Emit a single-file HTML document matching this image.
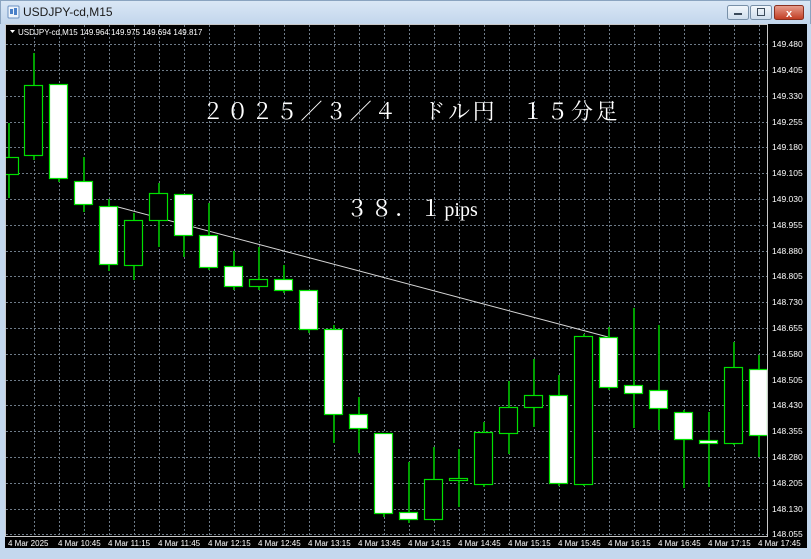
<!DOCTYPE html>
<html><head><meta charset="utf-8"><style>
html,body{margin:0;padding:0;width:811px;height:559px;overflow:hidden;background:#c4d8ee;}
svg{display:block}
</style></head><body>
<svg width="811" height="559" xmlns="http://www.w3.org/2000/svg" font-family="Liberation Sans, sans-serif">
<defs>
<linearGradient id="tb" x1="0" y1="0" x2="0" y2="1"><stop offset="0" stop-color="#dbe8f6"/><stop offset="1" stop-color="#c2d6ec"/></linearGradient>
<linearGradient id="cl" x1="0" y1="0" x2="0" y2="1"><stop offset="0" stop-color="#e8a090"/><stop offset="1" stop-color="#c03a20"/></linearGradient>
<linearGradient id="bt" x1="0" y1="0" x2="0" y2="1"><stop offset="0" stop-color="#f4f8fc"/><stop offset="1" stop-color="#ccdcec"/></linearGradient>
<clipPath id="plot"><rect x="6" y="24" width="761" height="513"/></clipPath>
</defs>
<rect x="0" y="0" width="811" height="559" fill="#c4d8ee"/>
<rect x="0" y="0" width="811" height="24" fill="url(#tb)"/>
<rect x="0.5" y="0.5" width="810" height="558" fill="none" stroke="#8aa4c0"/>
<!-- title icon -->
<rect x="8" y="6" width="11" height="12" rx="1" fill="#eef4fb" stroke="#6a90c0"/>
<rect x="10" y="9" width="3" height="5" fill="#4a80c8"/><rect x="14" y="8" width="3" height="7" fill="#4a80c8"/>
<text x="23" y="16" font-size="12" fill="#1a1a1a">USDJPY-cd,M15</text>
<!-- buttons -->
<rect x="727.5" y="5.5" width="21" height="14" rx="2" fill="url(#bt)" stroke="#7890a8"/>
<rect x="734" y="13" width="8" height="2" fill="#3a4a5a"/>
<rect x="750.5" y="5.5" width="21" height="14" rx="2" fill="url(#bt)" stroke="#7890a8"/>
<rect x="757.5" y="8.5" width="7" height="7" fill="none" stroke="#3a4a5a"/>
<rect x="774.5" y="5.5" width="29" height="14" rx="2" fill="url(#cl)" stroke="#8a3020"/>
<text x="789" y="17" font-size="11" font-weight="bold" fill="#fff" text-anchor="middle">x</text>
<!-- chart area -->
<rect x="5" y="24" width="802" height="524" fill="#000"/>
<g stroke="#6e7b88" stroke-width="1" stroke-dasharray="2 2">
<line x1="6" y1="44.5" x2="767" y2="44.5"/><line x1="6" y1="70.5" x2="767" y2="70.5"/><line x1="6" y1="96.5" x2="767" y2="96.5"/><line x1="6" y1="122.5" x2="767" y2="122.5"/><line x1="6" y1="147.5" x2="767" y2="147.5"/><line x1="6" y1="173.5" x2="767" y2="173.5"/><line x1="6" y1="199.5" x2="767" y2="199.5"/><line x1="6" y1="225.5" x2="767" y2="225.5"/><line x1="6" y1="251.5" x2="767" y2="251.5"/><line x1="6" y1="276.5" x2="767" y2="276.5"/><line x1="6" y1="302.5" x2="767" y2="302.5"/><line x1="6" y1="328.5" x2="767" y2="328.5"/><line x1="6" y1="354.5" x2="767" y2="354.5"/><line x1="6" y1="380.5" x2="767" y2="380.5"/><line x1="6" y1="405.5" x2="767" y2="405.5"/><line x1="6" y1="431.5" x2="767" y2="431.5"/><line x1="6" y1="457.5" x2="767" y2="457.5"/><line x1="6" y1="483.5" x2="767" y2="483.5"/><line x1="6" y1="509.5" x2="767" y2="509.5"/><line x1="6" y1="534.5" x2="767" y2="534.5"/>
<line x1="34.5" y1="25" x2="34.5" y2="537"/><line x1="59.5" y1="25" x2="59.5" y2="537"/><line x1="84.5" y1="25" x2="84.5" y2="537"/><line x1="109.5" y1="25" x2="109.5" y2="537"/><line x1="134.5" y1="25" x2="134.5" y2="537"/><line x1="159.5" y1="25" x2="159.5" y2="537"/><line x1="184.5" y1="25" x2="184.5" y2="537"/><line x1="209.5" y1="25" x2="209.5" y2="537"/><line x1="234.5" y1="25" x2="234.5" y2="537"/><line x1="259.5" y1="25" x2="259.5" y2="537"/><line x1="284.5" y1="25" x2="284.5" y2="537"/><line x1="309.5" y1="25" x2="309.5" y2="537"/><line x1="334.5" y1="25" x2="334.5" y2="537"/><line x1="359.5" y1="25" x2="359.5" y2="537"/><line x1="384.5" y1="25" x2="384.5" y2="537"/><line x1="409.5" y1="25" x2="409.5" y2="537"/><line x1="434.5" y1="25" x2="434.5" y2="537"/><line x1="459.5" y1="25" x2="459.5" y2="537"/><line x1="484.5" y1="25" x2="484.5" y2="537"/><line x1="509.5" y1="25" x2="509.5" y2="537"/><line x1="534.5" y1="25" x2="534.5" y2="537"/><line x1="559.5" y1="25" x2="559.5" y2="537"/><line x1="584.5" y1="25" x2="584.5" y2="537"/><line x1="609.5" y1="25" x2="609.5" y2="537"/><line x1="634.5" y1="25" x2="634.5" y2="537"/><line x1="659.5" y1="25" x2="659.5" y2="537"/><line x1="684.5" y1="25" x2="684.5" y2="537"/><line x1="709.5" y1="25" x2="709.5" y2="537"/><line x1="734.5" y1="25" x2="734.5" y2="537"/><line x1="759.5" y1="25" x2="759.5" y2="537"/>
</g>
<!-- text overlays -->
<text x="202" y="119" font-family="Liberation Serif, Noto Serif CJK SC, serif" font-size="22" letter-spacing="2.6" fill="#fff">２０２５／３／４　ドル円　１５分足</text>
<text x="346" y="216" font-family="Liberation Serif, Noto Serif CJK SC, serif" font-size="22" fill="#fff"><tspan letter-spacing="2.6">３８．１</tspan><tspan font-size="20">pips</tspan></text>
<!-- candles -->
<g clip-path="url(#plot)">
<line x1="118" y1="207" x2="608" y2="337" stroke="#d8d8d8" stroke-width="1"/>
<g stroke="#00a000" stroke-width="2">
<line x1="9" y1="123" x2="9" y2="198"/><line x1="34" y1="53" x2="34" y2="160"/><line x1="59" y1="84" x2="59" y2="182"/><line x1="84" y1="157" x2="84" y2="212"/><line x1="109" y1="199" x2="109" y2="271"/><line x1="134" y1="213" x2="134" y2="280"/><line x1="159" y1="183" x2="159" y2="247"/><line x1="184" y1="194" x2="184" y2="257"/><line x1="209" y1="203" x2="209" y2="270"/><line x1="234" y1="251" x2="234" y2="290"/><line x1="259" y1="247" x2="259" y2="290"/><line x1="284" y1="265" x2="284" y2="293"/><line x1="309" y1="290" x2="309" y2="333"/><line x1="334" y1="325" x2="334" y2="443"/><line x1="359" y1="397" x2="359" y2="453"/><line x1="384" y1="433" x2="384" y2="517"/><line x1="409" y1="462" x2="409" y2="523"/><line x1="434" y1="447" x2="434" y2="521"/><line x1="459" y1="449" x2="459" y2="507"/><line x1="484" y1="422" x2="484" y2="487"/><line x1="509" y1="381" x2="509" y2="454"/><line x1="534" y1="359" x2="534" y2="427"/><line x1="559" y1="375" x2="559" y2="486"/><line x1="584" y1="334" x2="584" y2="486"/><line x1="609" y1="327" x2="609" y2="390"/><line x1="634" y1="308" x2="634" y2="428"/><line x1="659" y1="325" x2="659" y2="430"/><line x1="684" y1="410" x2="684" y2="488"/><line x1="709" y1="412" x2="709" y2="487"/><line x1="734" y1="342" x2="734" y2="445"/><line x1="759" y1="355" x2="759" y2="457"/>
</g>
<g stroke="#00e000" stroke-width="1.2">
<rect x="0.5" y="157.5" width="18" height="17" fill="#000"/>
<rect x="24.5" y="85.5" width="18" height="70" fill="#000"/>
<rect x="49.5" y="84.5" width="18" height="94" fill="#fff"/>
<rect x="74.5" y="181.5" width="18" height="23" fill="#fff"/>
<rect x="99.5" y="206.5" width="18" height="58" fill="#fff"/>
<rect x="124.5" y="220.5" width="18" height="45" fill="#000"/>
<rect x="149.5" y="193.5" width="18" height="27" fill="#000"/>
<rect x="174.5" y="194.5" width="18" height="41" fill="#fff"/>
<rect x="199.5" y="235.5" width="18" height="32" fill="#fff"/>
<rect x="224.5" y="266.5" width="18" height="20" fill="#fff"/>
<rect x="249.5" y="279.5" width="18" height="7" fill="#000"/>
<rect x="274.5" y="279.5" width="18" height="11" fill="#fff"/>
<rect x="299.5" y="290.5" width="18" height="39" fill="#fff"/>
<rect x="324.5" y="329.5" width="18" height="85" fill="#fff"/>
<rect x="349.5" y="414.5" width="18" height="14" fill="#fff"/>
<rect x="374.5" y="433.5" width="18" height="80" fill="#fff"/>
<rect x="399.5" y="512.5" width="18" height="7" fill="#fff"/>
<rect x="424.5" y="479.5" width="18" height="40" fill="#000"/>
<rect x="449.5" y="478.5" width="18" height="2" fill="#000"/>
<rect x="474.5" y="432.5" width="18" height="52" fill="#000"/>
<rect x="499.5" y="407.5" width="18" height="26" fill="#000"/>
<rect x="524.5" y="395.5" width="18" height="12" fill="#000"/>
<rect x="549.5" y="395.5" width="18" height="88" fill="#fff"/>
<rect x="574.5" y="336.5" width="18" height="148" fill="#000"/>
<rect x="599.5" y="337.5" width="18" height="50" fill="#fff"/>
<rect x="624.5" y="385.5" width="18" height="8" fill="#fff"/>
<rect x="649.5" y="390.5" width="18" height="18" fill="#fff"/>
<rect x="674.5" y="412.5" width="18" height="27" fill="#fff"/>
<rect x="699.5" y="440.5" width="18" height="3" fill="#fff"/>
<rect x="724.5" y="367.5" width="18" height="76" fill="#000"/>
<rect x="749.5" y="369.5" width="18" height="66" fill="#fff"/>
</g>
</g>
<!-- plot border -->
<rect x="5.5" y="24.5" width="762" height="512" fill="none" stroke="#c8c8c8" stroke-width="1"/>
<!-- header -->
<path d="M10 30 L15 30 L12.5 33 Z" fill="#fff"/>
<text x="18" y="35" font-size="8" fill="#fff">USDJPY-cd,M15  149.964 149.975 149.694 149.817</text>
<!-- price axis -->
<g font-size="8.5" fill="#fff">
<text x="772" y="47">149.480</text><text x="772" y="73">149.405</text><text x="772" y="99">149.330</text><text x="772" y="125">149.255</text><text x="772" y="150">149.180</text><text x="772" y="176">149.105</text><text x="772" y="202">149.030</text><text x="772" y="228">148.955</text><text x="772" y="254">148.880</text><text x="772" y="279">148.805</text><text x="772" y="305">148.730</text><text x="772" y="331">148.655</text><text x="772" y="357">148.580</text><text x="772" y="383">148.505</text><text x="772" y="408">148.430</text><text x="772" y="434">148.355</text><text x="772" y="460">148.280</text><text x="772" y="486">148.205</text><text x="772" y="512">148.130</text><text x="772" y="537">148.055</text>
</g>
<!-- time axis -->
<g font-size="8" fill="#fff">
<text x="8" y="546">4 Mar 2025</text><text x="58" y="546">4 Mar 10:45</text><text x="108" y="546">4 Mar 11:15</text><text x="158" y="546">4 Mar 11:45</text><text x="208" y="546">4 Mar 12:15</text><text x="258" y="546">4 Mar 12:45</text><text x="308" y="546">4 Mar 13:15</text><text x="358" y="546">4 Mar 13:45</text><text x="408" y="546">4 Mar 14:15</text><text x="458" y="546">4 Mar 14:45</text><text x="508" y="546">4 Mar 15:15</text><text x="558" y="546">4 Mar 15:45</text><text x="608" y="546">4 Mar 16:15</text><text x="658" y="546">4 Mar 16:45</text><text x="708" y="546">4 Mar 17:15</text><text x="758" y="546">4 Mar 17:45</text>
</g>
<rect x="0" y="548" width="811" height="11" fill="#c4d8ee"/>
<rect x="807" y="24" width="4" height="524" fill="#c4d8ee"/>
<rect x="0" y="24" width="5" height="524" fill="#c4d8ee"/>
</svg>
</body></html>
